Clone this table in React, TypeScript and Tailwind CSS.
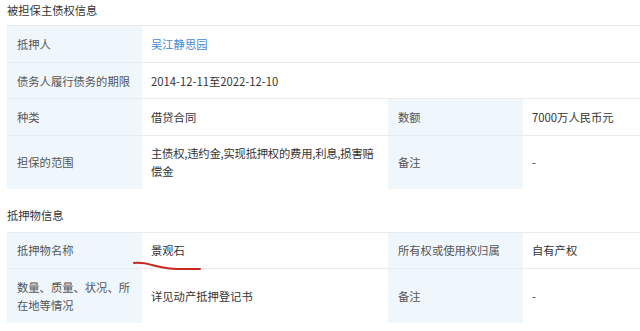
const font = { fontFamily: '"PingFang SC", "Noto Sans CJK SC", "Noto Sans", sans-serif' };

const Label = ({ children, rows }: { children: React.ReactNode; rows?: number }) => (
    <td
        rowSpan={rows}
        className="bg-[#eff6fc] px-[10px] align-middle text-[#555] border-t border-[#e9ecef]"
    >
        {children}
    </td>
);

const Value = ({ children, span, link }: { children: React.ReactNode; span?: number; link?: boolean }) => (
    <td
        colSpan={span}
        className={`px-[9px] align-middle border-t border-[#e9ecef] bg-white ${link ? 'text-[#3e8ad6]' : 'text-[#333]'}`}
    >
        {children}
    </td>
);

const Cols = () => (
    <colgroup>
        <col className="w-[135px]" />
        <col className="w-[246px]" />
        <col className="w-[135px]" />
        <col className="w-[246px]" />
    </colgroup>
);

export default function App() {
    return (
        <div className="relative w-[640px] h-[331px] overflow-hidden bg-white text-[11.3px] leading-[18px]" style={font}>
            <div className="pl-[7px] pt-[1px]">
                <div className="text-[#333] h-[18px] mb-[6px]">被担保主债权信息</div>

                <table className="table-fixed border-collapse w-[762px]">
                    <Cols />
                    <tbody>
                        <tr className="h-[37px]">
                            <Label>抵押人</Label>
                            <Value span={3} link>
                                吴江静思园
                            </Value>
                        </tr>
                        <tr className="h-[36px]">
                            <Label>债务人履行债务的期限</Label>
                            <Value span={3}>2014-12-11至2022-12-10</Value>
                        </tr>
                        <tr className="h-[37px]">
                            <Label>种类</Label>
                            <Value>借贷合同</Value>
                            <Label>数额</Label>
                            <Value>7000万人民币元</Value>
                        </tr>
                        <tr className="h-[53px]">
                            <Label>担保的范围</Label>
                            <Value>
                                <span className="whitespace-nowrap tracking-[-0.2px]">
                                    主债权,违约金,实现抵押权的费用,利息,损害赔
                                </span>
                                <br />
                                偿金
                            </Value>
                            <Label>备注</Label>
                            <Value>-</Value>
                        </tr>
                    </tbody>
                </table>

                <div className="text-[#333] h-[18px] mt-[17px] mb-[8px]">抵押物信息</div>

                <table className="table-fixed border-collapse w-[762px]">
                    <Cols />
                    <tbody>
                        <tr className="h-[36px]">
                            <Label>抵押物名称</Label>
                            <Value>景观石</Value>
                            <Label>所有权或使用权归属</Label>
                            <Value>自有产权</Value>
                        </tr>
                        <tr className="h-[55px]">
                            <Label>数量、质量、状况、所在地等情况</Label>
                            <Value>详见动产抵押登记书</Value>
                            <Label>备注</Label>
                            <Value>-</Value>
                        </tr>
                    </tbody>
                </table>
            </div>

            {/* hand-drawn red underline */}
            <svg className="absolute left-[130px] top-[259px]" width="76" height="14" viewBox="0 0 76 14">
                <path
                    d="M4 4 C 12 3, 18 5, 26 7 S 38 10, 48 10 L 70 10"
                    fill="none"
                    stroke="#c8281e"
                    strokeWidth="2"
                    strokeLinecap="round"
                />
            </svg>
        </div>
    );
}
